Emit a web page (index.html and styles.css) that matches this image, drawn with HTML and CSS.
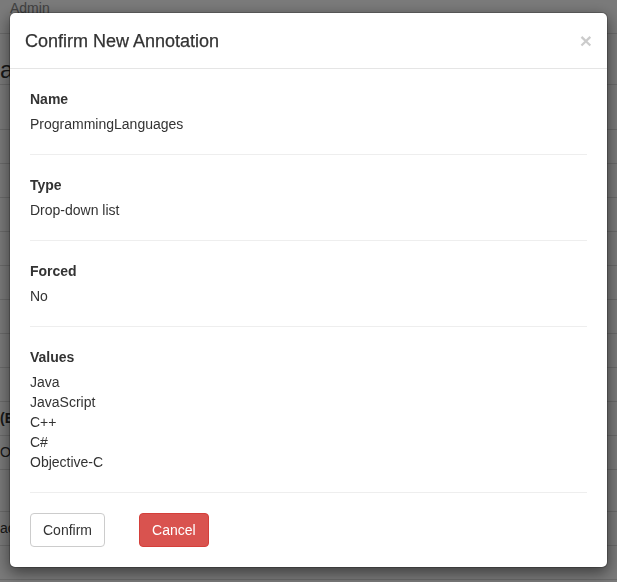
FILE: index.html
```html
<!DOCTYPE html>
<html>
<head>
<meta charset="utf-8">
<link rel="stylesheet" href="styles.css">
</head>
<body>
<div class="page">
  <div class="navbar"><span class="nav-link">Admin</span></div>
  <div class="rows">
    <div class="row r1">a</div>
    <div class="row r2"></div>
    <div class="row"></div>
    <div class="row"></div>
    <div class="row"></div>
    <div class="row"></div>
    <div class="row"></div>
    <div class="row"></div>
    <div class="row"></div>
    <div class="row"></div>
    <div class="row bold">(E</div>
    <div class="row">O</div>
    <div class="row tall"></div>
    <div class="row">ac</div>
    <div class="row"></div>
  </div>
</div>

<div class="backdrop"></div>
<div class="modal">
  <div class="modal-dialog">
    <div class="modal-content">
      <div class="modal-header">
        <button class="close" type="button">&times;</button>
        <h4 class="modal-title">Confirm New Annotation</h4>
      </div>
      <div class="modal-body">
        <div class="field">
          <div class="label">Name</div>
          <div class="value">ProgrammingLanguages</div>
        </div>
        <hr class="divider">
        <div class="field">
          <div class="label">Type</div>
          <div class="value">Drop-down list</div>
        </div>
        <hr class="divider">
        <div class="field">
          <div class="label">Forced</div>
          <div class="value">No</div>
        </div>
        <hr class="divider">
        <div class="field">
          <div class="label">Values</div>
          <div class="value">Java</div>
          <div class="value-line">JavaScript</div>
          <div class="value-line">C++</div>
          <div class="value-line">C#</div>
          <div class="value-line">Objective-C</div>
        </div>
        <hr class="divider">
        <div class="actions">
          <button class="btn btn-default" type="button">Confirm</button>
          <button class="btn btn-danger" type="button">Cancel</button>
        </div>
      </div>
    </div>
  </div>
</div>
</body>
</html>
```

FILE: styles.css
```css
html, body {
  margin: 0;
  padding: 0;
  background: #fff;
  font-family: "Liberation Sans", Arial, Helvetica, sans-serif;
  font-size: 14px;
  line-height: 1.42857;
  color: #333;
  overflow: hidden;
  height: 582px;
}

.navbar {
  height: 34px;
  border-bottom: 1px solid #ddd;
  box-sizing: border-box;
  padding-left: 10px;
}
.nav-link {
  display: block;
  color: #888;
  line-height: 16px;
  font-size: 14px;
}

.rows {
  display: flex;
  flex-direction: column;
}
.row {
  height: 34px;
  box-sizing: border-box;
  border-bottom: 1px solid #ddd;
  line-height: 33px;
  font-size: 14px;
  color: #333;
  white-space: nowrap;
}
.row.r1 {
  height: 51px;
  font-size: 24px;
  line-height: 30px;
  padding-top: 21px;
}
.row.r2 { height: 45px; }
.row.bold { font-weight: bold; }
.row.tall { height: 42px; }

.backdrop {
  position: fixed;
  inset: 0;
  background: #000;
  opacity: 0.52;
}

.modal {
  position: fixed;
  inset: 0;
}
.modal-dialog {
  width: 599px;
  margin: 12px 0 0 9px;
}
.modal-content {
  background: #fff;
  border: 1px solid rgba(0,0,0,.2);
  border-radius: 6px;
  box-shadow: 0 5px 15px rgba(0,0,0,.5);
  background-clip: padding-box;
}
.modal-header {
  padding: 15px 15px 14px;
  border-bottom: 1px solid #e5e5e5;
  display: flex;
  flex-direction: row-reverse;
  justify-content: space-between;
  align-items: flex-start;
}
.modal-title {
  margin: 0;
  font-size: 18px;
  font-weight: 500;
  line-height: 26px;
  color: #333;
  -webkit-text-stroke: 0.25px #333;
}
.close {
  background: none;
  border: 0;
  padding: 0;
  margin-top: 2px;
  font-family: "Liberation Sans", Arial, sans-serif;
  font-size: 21px;
  font-weight: bold;
  line-height: 1;
  color: #000;
  opacity: .2;
  cursor: pointer;
}

.modal-body {
  padding: 20px;
}
.field {
  display: flex;
  flex-direction: column;
}
.label {
  font-weight: bold;
  margin-bottom: 5px;
  line-height: 20px;
}
.value, .value-line {
  line-height: 20px;
}
.divider {
  margin: 20px 0;
  border: 0;
  border-top: 1px solid #eee;
  height: 0;
}

.actions {
  display: flex;
  gap: 34px;
}
.btn {
  font-family: "Liberation Sans", Arial, sans-serif;
  font-size: 14px;
  line-height: 20px;
  padding: 6px 12px;
  border: 1px solid transparent;
  border-radius: 4px;
  cursor: pointer;
}
.btn-default {
  color: #333;
  background: #fff;
  border-color: #ccc;
}
.btn-danger {
  color: #fff;
  background: #d9534f;
  border-color: #d43f3a;
}
```
